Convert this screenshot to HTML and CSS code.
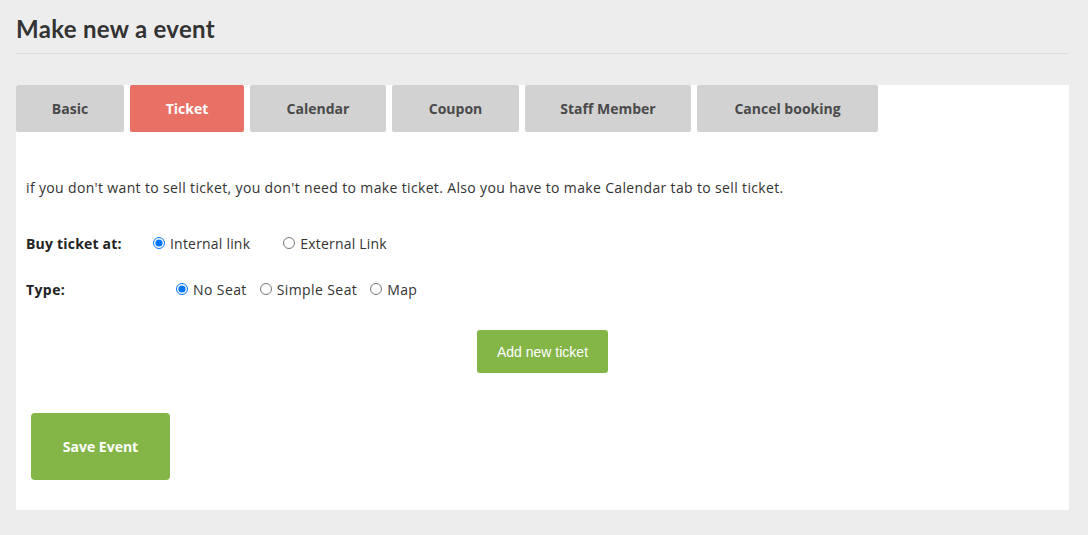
FILE: index.html
```html
<!DOCTYPE html>
<html lang="en">
<head>
    <meta charset="UTF-8">
    <title>Make new a event</title>
    <link rel="stylesheet" href="styles.css">
</head>
<body>
<div class="page">
    <h1 class="page-title">Make new a event</h1>

    <div class="panel">
        <ul class="tabs">
            <li class="tab">Basic</li>
            <li class="tab active">Ticket</li>
            <li class="tab">Calendar</li>
            <li class="tab">Coupon</li>
            <li class="tab">Staff Member</li>
            <li class="tab">Cancel booking</li>
        </ul>

        <div class="tab-body">
            <p class="note">if you don't want to sell ticket, you don't need to make ticket. Also you have to make Calendar tab to sell ticket.</p>

            <div class="row">
                <span class="label label-buy">Buy ticket at:</span>
                <label class="opt"><input type="radio" name="buy" checked> Internal link</label>
                <label class="opt opt-wide"><input type="radio" name="buy"> External Link</label>
            </div>

            <div class="row">
                <span class="label label-type">Type:</span>
                <label class="opt"><input type="radio" name="seat" checked> No Seat</label>
                <label class="opt"><input type="radio" name="seat"> Simple Seat</label>
                <label class="opt"><input type="radio" name="seat"> Map</label>
            </div>

            <div class="add-wrap">
                <button class="btn-add">Add new ticket</button>
            </div>

            <button class="btn-save">Save Event</button>
        </div>
    </div>
</div>
</body>
</html>
```

FILE: styles.css
```css
* {
    margin: 0;
    padding: 0;
    box-sizing: border-box;
}

body {
    background: #ededed;
    font-family: "Open Sans", "Noto Sans", sans-serif;
    color: #333;
}

.page {
    padding: 15px 19px 0 16px;
}

.page-title {
    font-family: Lato, "Open Sans", sans-serif;
    font-size: 24px;
    font-weight: 700;
    letter-spacing: 0.3px;
    color: #333;
    line-height: 28px;
    padding-bottom: 10px;
    border-bottom: 1px solid #dcdcdc;
    margin-bottom: 31px;
}

/* white card */
.panel {
    background: #fff;
    padding-bottom: 30px;
}

.tabs {
    list-style: none;
    display: flex;
    gap: 6px;
}

.tab {
    height: 47px;
    line-height: 48px;
    background: #d2d2d2;
    color: #4a4a4a;
    font-size: 14px;
    font-weight: 700;
    border-radius: 2px;
    text-align: center;
}

.tab:nth-child(1) { width: 108px; }
.tab:nth-child(2) { width: 114px; }
.tab:nth-child(3) { width: 136px; }
.tab:nth-child(4) { width: 127px; }
.tab:nth-child(5) { width: 166px; }
.tab:nth-child(6) { width: 181px; }

.tab.active {
    background: #e87064;
    color: #fff;
}

.tab-body {
    padding: 0 10px;
}

.note {
    font-size: 14px;
    letter-spacing: 0.35px;
    line-height: 20px;
    margin-top: 46px;
    color: #333;
}

.row {
    display: flex;
    align-items: center;
    height: 20px;
    font-size: 14px;
    letter-spacing: 0.2px;
    margin-top: 35px;
}

.row + .row {
    margin-top: 26px;
    letter-spacing: 0.4px;
}

.label {
    font-weight: 700;
    color: #222;
}

.label-buy { width: 127px; }
.label-type { width: 150px; }

.opt {
    display: flex;
    align-items: center;
    margin-right: 13px;
    color: #333;
}

.opt-wide {
    margin-left: 20px;
}

.opt input {
    width: 12px;
    height: 12px;
    margin: 0 5px 0 0;
}

.add-wrap {
    display: flex;
    justify-content: center;
    margin-top: 31px;
}

.btn-add {
    width: 131px;
    height: 43px;
    border: none;
    border-radius: 3px;
    background: #84b547;
    color: #fff;
    font-family: "Liberation Sans", Arial, sans-serif;
    font-size: 14px;
}

.btn-save {
    display: block;
    width: 139px;
    height: 67px;
    margin: 40px 0 0 5px;
    border: none;
    border-radius: 4px;
    background: #84b547;
    color: #fff;
    font-family: "Open Sans", sans-serif;
    font-size: 14px;
    font-weight: 700;
}
```
